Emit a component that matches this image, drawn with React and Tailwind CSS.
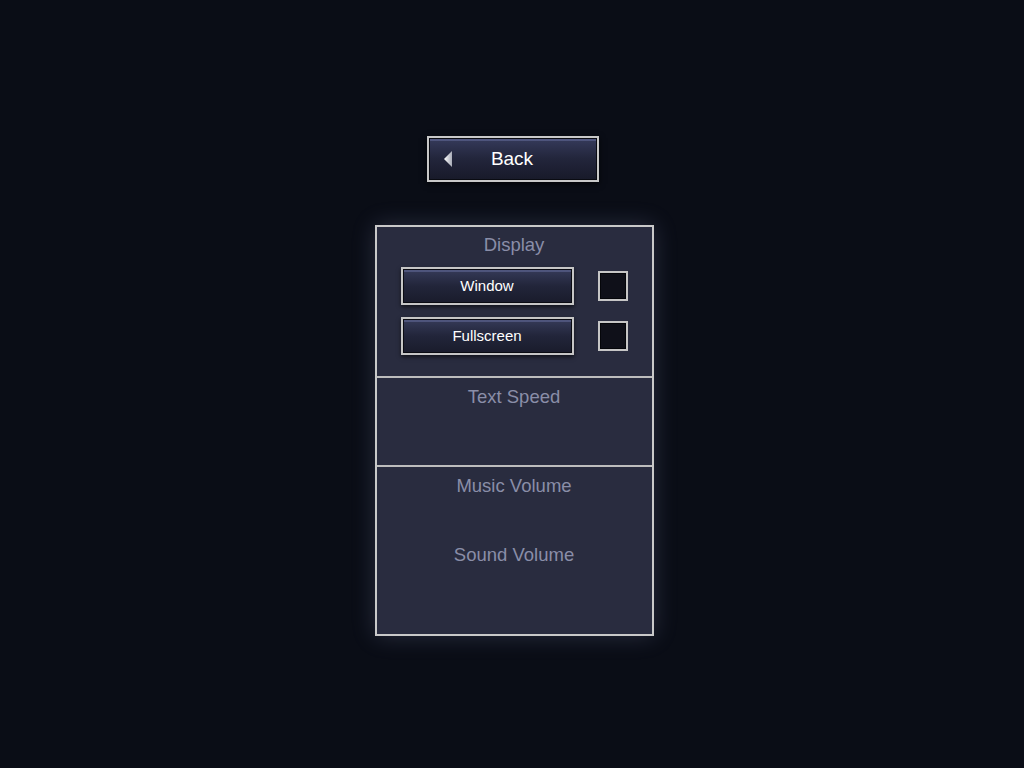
export default function App() {
  const font = { fontFamily: '"Liberation Sans", Arial, sans-serif' };
  const Btn = ({ label }) => (
    <div className="h-[38px] w-[173px] border-2 border-[#c6c6c6] bg-black shadow-[0_2px_4px_rgba(0,0,0,0.6)]">
      <div className="flex h-full w-full items-center justify-center border border-[#0a0b12] bg-gradient-to-b from-[#353a58] via-[#22253a] to-[#1a1c2c] shadow-[inset_0_2px_0_rgba(110,120,170,0.45)] text-[15px] text-white">
        {label}
      </div>
    </div>
  );
  const Check = () => (
    <div className="h-[30px] w-[30px] border-2 border-[#c6c6c6] bg-[#0f1019] shadow-[inset_0_0_0_1px_#05060a]" />
  );
  return (
    <div style={font} className="flex h-[768px] w-full flex-col items-center bg-[#0a0d16] pt-[136px]">
      <div className="ml-[2px] h-[46px] w-[172px] border-2 border-[#c8c8c8] bg-black shadow-[0_2px_6px_rgba(0,0,0,0.7)]">
        <div className="relative flex h-full w-full items-center justify-center border border-[#0a0b12] bg-gradient-to-b from-[#353a5a] via-[#22253b] to-[#181a2a] shadow-[inset_0_2px_0_rgba(110,120,170,0.45)]">
          <svg className="absolute left-[13px] top-[11px]" width="10" height="18" viewBox="0 0 10 18">
            <defs>
              <linearGradient id="tri" x1="0" y1="0" x2="1" y2="0">
                <stop offset="0" stopColor="#ffffff" />
                <stop offset="1" stopColor="#a9acb8" />
              </linearGradient>
            </defs>
            <polygon points="9,1 1,9 9,17" fill="url(#tri)" />
          </svg>
          <span className="mr-[2px] text-[19px] text-white">Back</span>
        </div>
      </div>

      <div className="mt-[43px] ml-[4px] w-[279px] border-2 border-[#c9c9c9] bg-[#292c3f] shadow-[0_0_22px_rgba(150,160,210,0.22)]">
        <div className="flex h-[149px] flex-col items-center pt-[7px]">
          <div className="text-[18.5px] leading-[22px] text-[#8a8ea8]">Display</div>
          <div className="mt-[11px] flex w-full flex-col gap-[12px] px-6">
            <div className="flex items-center gap-6">
              <Btn label="Window" />
              <Check />
            </div>
            <div className="flex items-center gap-6">
              <Btn label="Fullscreen" />
              <Check />
            </div>
          </div>
        </div>
        <div className="flex h-[89px] flex-col items-center border-t-2 border-[#bdbdbd] pt-[8px]">
          <div className="text-[18.5px] leading-[22px] text-[#8a8ea8]">Text Speed</div>
        </div>
        <div className="flex h-[169px] flex-col items-center border-t-2 border-[#bdbdbd] pt-[8px]">
          <div className="text-[18.5px] leading-[22px] text-[#8a8ea8]">Music Volume</div>
          <div className="mt-[47px] text-[18.5px] leading-[22px] text-[#8a8ea8]">Sound Volume</div>
        </div>
      </div>
    </div>
  );
}
